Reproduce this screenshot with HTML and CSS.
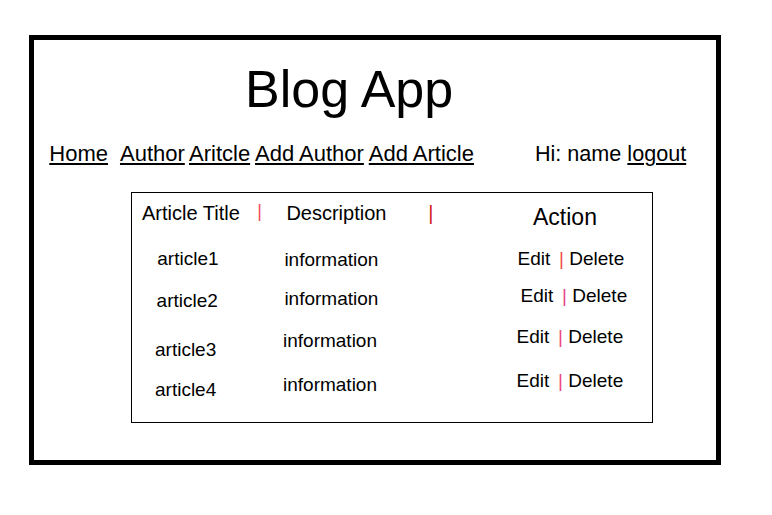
FILE: index.html
```html
<!DOCTYPE html>
<html lang="en">
<head>
<meta charset="utf-8">
<title>Blog App</title>
<link rel="stylesheet" href="styles.css">
</head>
<body>
<div class="frame">
  <h1 class="title">Blog App</h1>
  <nav class="nav">
    <a href="#" class="nav-link nav-home">Home</a>
    <a href="#" class="nav-link nav-author">Author</a>
    <a href="#" class="nav-link nav-article">Aritcle</a>
    <a href="#" class="nav-link nav-add-author">Add Author</a>
    <a href="#" class="nav-link nav-add-article">Add Article</a>
    <span class="user">Hi: name <a href="#" class="nav-link">logout</a></span>
  </nav>
  <div class="table">
    <div class="col col-title">
      <div class="head">Article Title<span class="sep sep-title">|</span></div>
      <div class="cell">article1</div>
      <div class="cell">article2</div>
      <div class="cell">article3</div>
      <div class="cell">article4</div>
    </div>
    <div class="col col-desc">
      <div class="head">Description<span class="sep sep-desc">|</span></div>
      <div class="cell">information</div>
      <div class="cell">information</div>
      <div class="cell">information</div>
      <div class="cell">information</div>
    </div>
    <div class="col col-action">
      <div class="head-action">Action</div>
      <div class="actions"><a href="#" class="act">Edit</a><span class="sep sep-a1">|</span><a href="#" class="act">Delete</a></div>
      <div class="actions"><a href="#" class="act">Edit</a><span class="sep sep-a2">|</span><a href="#" class="act">Delete</a></div>
      <div class="actions"><a href="#" class="act">Edit</a><span class="sep sep-a3">|</span><a href="#" class="act">Delete</a></div>
      <div class="actions"><a href="#" class="act">Edit</a><span class="sep sep-a3">|</span><a href="#" class="act">Delete</a></div>
    </div>
  </div>
</div>
</body>
</html>
```

FILE: styles.css
```css
html, body {
  margin: 0;
  padding: 0;
  background: #fff;
}

body {
  font-family: "Liberation Sans", Arial, sans-serif;
  color: #000;
}

.frame {
  box-sizing: border-box;
  width: 692px;
  height: 430px;
  margin: 35px 0 0 29px;
  border: 5px solid #000;
}

.title {
  margin: 23px 0 0 211px;
  font-size: 52px;
  line-height: 52px;
  font-weight: normal;
  white-space: nowrap;
}

.nav {
  display: flex;
  margin-top: 28px;
  padding-left: 15.3px;
  font-size: 22px;
  line-height: 22px;
  white-space: nowrap;
}

.nav-link {
  color: #000;
  text-decoration: underline;
}

.nav-author { margin-left: 12px; }
.nav-article { margin-left: 4.2px; }
.nav-add-author { margin-left: 4.9px; }
.nav-add-article { margin-left: 4.9px; }
.user {
  margin-left: 61px;
  font-size: 21.6px;
}

.table {
  box-sizing: border-box;
  display: flex;
  width: 522px;
  height: 231px;
  margin: 27px 0 0 97px;
  padding: 10px 0 0 10px;
  border: 1px solid #000;
}

.col {
  display: flex;
  flex-direction: column;
  align-items: flex-start;
  white-space: nowrap;
}

.col-title { width: 141px; }
.col-desc { width: 233.5px; }
.col-action { flex: 1; }

.head {
  font-size: 20px;
  line-height: 20px;
}

.cell {
  font-size: 19px;
  line-height: 19px;
}

.sep {
  line-height: 0;
}

.sep-title {
  margin-left: 17.5px;
  font-size: 18px;
  vertical-align: 3px;
  color: #f24a60;
}

.sep-desc {
  margin-left: 41.8px;
  color: #cf1c1c;
}

.col-title .cell:nth-child(2) { margin: 26px 0 0 15.3px; }
.col-title .cell:nth-child(3) { margin: 22.7px 0 0 14.6px; }
.col-title .cell:nth-child(4) { margin: 30px 0 0 13px; }
.col-title .cell:nth-child(5) { margin: 21px 0 0 13px; }

.col-desc .head { margin-left: 3.4px; }
.col-desc .cell:nth-child(2) { margin: 27px 0 0 1.4px; }
.col-desc .cell:nth-child(3) { margin: 19.7px 0 0 1.4px; }
.col-desc .cell:nth-child(4) { margin: 23.3px 0 0 0; }
.col-desc .cell:nth-child(5) { margin: 24.7px 0 0 0; }

.head-action {
  margin: 2.5px 0 0 16.5px;
  font-size: 23px;
  line-height: 23px;
}

.actions {
  display: flex;
  font-size: 19px;
  line-height: 19px;
}

.col-action .actions:nth-child(2) { margin: 20.5px 0 0 1px; }
.col-action .actions:nth-child(3) { margin: 18px 0 0 4px; }
.col-action .actions:nth-child(4) { margin: 22px 0 0 0; }
.col-action .actions:nth-child(5) { margin: 25px 0 0 0; }

.act {
  color: #000;
  text-decoration: none;
}

.actions .sep {
  margin: 0 5.3px 0 8.8px;
  line-height: inherit;
}

.sep-a1 { color: #f24b4b; }
.sep-a2 { color: #e8458a; }
.sep-a3 { color: #ee4a7c; }
```
